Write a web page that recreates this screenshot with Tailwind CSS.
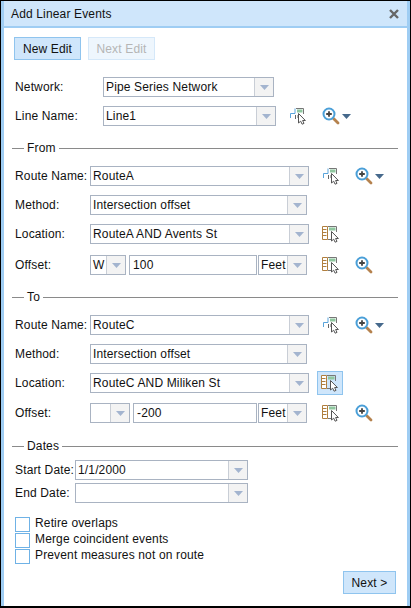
<!DOCTYPE html>
<html lang="en">
<head>
  <meta charset="UTF-8">
  <title>Add Linear Events</title>
  <script src="https://cdn.jsdelivr.net/npm/@tailwindcss/browser@4"></script>
</head>
<body class="bg-white font-['Liberation_Sans',Arial,sans-serif] text-[12px] tracking-[0.15px] text-[#111]">
  <svg class="hidden">
    <symbol id="arrow" viewBox="0 0 9 5"><path d="M0 0h9L4.500 5z" fill="#a3b4cf"/></symbol>
    <symbol id="pick" viewBox="0 0 18 18">
      <path d="M1.500 11V6.500h4.500V1.500" fill="none" stroke="#5aa5dc" stroke-width="1"/>
      <path d="M7 1.500h7.500V7" fill="none" stroke="#777" stroke-width="1"/>
      <path d="M8 2.500h5.500v3H8z" fill="#8fc79f"/>
      <path d="M6.500 8v4M9 8v3" stroke="#666" stroke-width="1"/>
      <path d="M9.500 6.500v9.500l2.200-1.800 1.400 3 1.900-.8-1.400-2.900h2.800z" fill="#fff" stroke="#555" stroke-width="1"/>
    </symbol>
    <symbol id="table" viewBox="0 0 18 18">
      <path d="M.5 1.500h5v13h-5z" fill="#fff" stroke="#b07f3e" stroke-width="1"/>
      <path d="M1 4.500h3.500M1 7.500h3.500M1 10.500h3.500" stroke="#b07f3e" stroke-width="1.200"/>
      <path d="M6 1.500h8.500V7M6 14.500h3" fill="none" stroke="#777" stroke-width="1"/>
      <path d="M7 2.500h6.500v3H7z" fill="#8fc79f"/>
      <path d="M9.500 6.500v9.500l2.200-1.800 1.400 3 1.900-.8-1.400-2.900h2.800z" fill="#fff" stroke="#555" stroke-width="1"/>
    </symbol>
    <symbol id="zoom" viewBox="0 0 18 18">
      <path d="M11.500 11.500l4.500 4.500" stroke="#b5824e" stroke-width="2.800" stroke-linecap="round"/>
      <circle cx="7" cy="7" r="5.500" fill="#fff" stroke="#4a9fd8" stroke-width="2"/>
      <path d="M4.200 7h5.600M7 4.200v5.600" stroke="#444" stroke-width="1.800"/>
    </symbol>
  </svg>

  <div class="h-[608px] border-x-[1px] border-t-[1px] border-b-[2px] border-black">
    <div class="flex h-full flex-col border-x-[3px] border-[#9fcdf3]">
      <!-- title bar -->
      <div class="flex h-[25px] shrink-0 items-center justify-between bg-[#cfe6fb] pl-[7px] pr-[8px] text-[12px]">
        <span>Add Linear Events</span>
        <svg class="h-[10px] w-[10px]" viewBox="0 0 10 10"><path d="M1 1l8 8M9 1l-8 8" stroke="#666" stroke-width="2.400"/></svg>
      </div>

      <div class="relative grow border-t-[2px] border-[#9fcdf3] pl-[10px] pt-[9px]">
        <div class="flex gap-[7px]">
          <div class="flex h-[23px] w-[67px] items-center justify-center border border-[#8fc4ee] bg-[#cfe6fb]">New Edit</div>
          <div class="flex h-[23px] w-[67px] items-center justify-center border border-[#d5e8f9] bg-[#eef6fd] text-[#b5b5b5]">Next Edit</div>
        </div>

        <!-- network -->
        <div class="mt-[17px] flex h-[20px] items-center">
          <span class="ml-[1px] w-[88px] shrink-0">Network:</span>
          <div class="flex h-[20px] w-[171px] border border-[#a9b3c2]"><span class="grow pl-[2px] leading-[18px]">Pipe Series Network</span><span class="flex w-[19px] items-center justify-center border-l border-[#c9ced6] bg-[#f3f3f3]"><svg class="h-[5px] w-[9px]"><use href="#arrow"/></svg></span></div>
        </div>
        <div class="mt-[9px] flex h-[20px] items-center">
          <span class="ml-[1px] w-[88px] shrink-0">Line Name:</span>
          <div class="flex h-[20px] w-[173px] border border-[#a9b3c2]"><span class="grow pl-[2px] leading-[18px]">Line1</span><span class="flex w-[19px] items-center justify-center border-l border-[#c9ced6] bg-[#f3f3f3]"><svg class="h-[5px] w-[9px]"><use href="#arrow"/></svg></span></div>
          <svg class="ml-[13px] h-[18px] w-[18px]"><use href="#pick"/></svg>
          <svg class="ml-[15px] h-[18px] w-[18px]"><use href="#zoom"/></svg>
          <svg class="ml-[2px] h-[5px] w-[9px]" viewBox="0 0 9 5"><path d="M0 0h9L4.500 5z" fill="#46698c"/></svg>
        </div>

        <!-- from -->
        <div class="mt-[14px] mr-[9px] ml-[-2px] flex h-[16px] items-center gap-[3px]">
          <span class="h-[1px] w-[12px] bg-[#8a8a8a]"></span><span>From</span><span class="h-[1px] grow bg-[#8a8a8a]"></span>
        </div>
        <div class="mt-[10px] flex h-[20px] items-center">
          <span class="ml-[1px] w-[75px] shrink-0">Route Name:</span>
          <div class="flex h-[20px] w-[219px] border border-[#a9b3c2]"><span class="grow pl-[2px] leading-[18px]">RouteA</span><span class="flex w-[19px] items-center justify-center border-l border-[#c9ced6] bg-[#f3f3f3]"><svg class="h-[5px] w-[9px]"><use href="#arrow"/></svg></span></div>
          <svg class="ml-[13px] h-[18px] w-[18px]"><use href="#pick"/></svg>
          <svg class="ml-[15px] h-[18px] w-[18px]"><use href="#zoom"/></svg>
          <svg class="ml-[2px] h-[5px] w-[9px]" viewBox="0 0 9 5"><path d="M0 0h9L4.500 5z" fill="#46698c"/></svg>
        </div>
        <div class="mt-[9px] flex h-[20px] items-center">
          <span class="ml-[1px] w-[75px] shrink-0">Method:</span>
          <div class="flex h-[20px] w-[217px] border border-[#a9b3c2]"><span class="grow pl-[2px] leading-[18px]">Intersection offset</span><span class="flex w-[19px] items-center justify-center border-l border-[#c9ced6] bg-[#f3f3f3]"><svg class="h-[5px] w-[9px]"><use href="#arrow"/></svg></span></div>
        </div>
        <div class="mt-[9px] flex h-[20px] items-center">
          <span class="ml-[1px] w-[75px] shrink-0">Location:</span>
          <div class="flex h-[20px] w-[219px] border border-[#a9b3c2]"><span class="grow pl-[2px] leading-[18px]">RouteA AND Avents St</span><span class="flex w-[19px] items-center justify-center border-l border-[#c9ced6] bg-[#f3f3f3]"><svg class="h-[5px] w-[9px]"><use href="#arrow"/></svg></span></div>
          <svg class="ml-[13px] h-[18px] w-[18px]"><use href="#table"/></svg>
        </div>
        <div class="mt-[11px] flex h-[20px] items-center">
          <span class="ml-[1px] w-[75px] shrink-0">Offset:</span>
          <div class="flex h-[20px] w-[36px] border border-[#a9b3c2]"><span class="grow pl-[2px] leading-[18px]">W</span><span class="flex w-[19px] shrink-0 items-center justify-center border-l border-[#c9ced6] bg-[#f3f3f3]"><svg class="h-[5px] w-[9px]"><use href="#arrow"/></svg></span></div>
          <div class="ml-[3px] h-[20px] w-[128px] border border-[#a9b3c2] pl-[3px] leading-[18px]">100</div>
          <div class="ml-[1px] flex h-[20px] w-[49px] border border-[#a9b3c2]"><span class="grow pl-[2px] leading-[18px]">Feet</span><span class="flex w-[19px] shrink-0 items-center justify-center border-l border-[#c9ced6] bg-[#f3f3f3]"><svg class="h-[5px] w-[9px]"><use href="#arrow"/></svg></span></div>
          <svg class="ml-[15px] h-[18px] w-[18px]"><use href="#table"/></svg>
          <svg class="ml-[15px] h-[18px] w-[18px]"><use href="#zoom"/></svg>
        </div>

        <!-- to -->
        <div class="mt-[14px] mr-[9px] ml-[-2px] flex h-[16px] items-center gap-[3px]">
          <span class="h-[1px] w-[12px] bg-[#8a8a8a]"></span><span>To</span><span class="h-[1px] grow bg-[#8a8a8a]"></span>
        </div>
        <div class="mt-[10px] flex h-[20px] items-center">
          <span class="ml-[1px] w-[75px] shrink-0">Route Name:</span>
          <div class="flex h-[20px] w-[219px] border border-[#a9b3c2]"><span class="grow pl-[2px] leading-[18px]">RouteC</span><span class="flex w-[19px] items-center justify-center border-l border-[#c9ced6] bg-[#f3f3f3]"><svg class="h-[5px] w-[9px]"><use href="#arrow"/></svg></span></div>
          <svg class="ml-[13px] h-[18px] w-[18px]"><use href="#pick"/></svg>
          <svg class="ml-[15px] h-[18px] w-[18px]"><use href="#zoom"/></svg>
          <svg class="ml-[2px] h-[5px] w-[9px]" viewBox="0 0 9 5"><path d="M0 0h9L4.500 5z" fill="#46698c"/></svg>
        </div>
        <div class="mt-[9px] flex h-[20px] items-center">
          <span class="ml-[1px] w-[75px] shrink-0">Method:</span>
          <div class="flex h-[20px] w-[217px] border border-[#a9b3c2]"><span class="grow pl-[2px] leading-[18px]">Intersection offset</span><span class="flex w-[19px] items-center justify-center border-l border-[#c9ced6] bg-[#f3f3f3]"><svg class="h-[5px] w-[9px]"><use href="#arrow"/></svg></span></div>
        </div>
        <div class="mt-[9px] flex h-[20px] items-center">
          <span class="ml-[1px] w-[75px] shrink-0">Location:</span>
          <div class="flex h-[20px] w-[219px] border border-[#a9b3c2]"><span class="grow pl-[2px] leading-[18px]">RouteC AND Miliken St</span><span class="flex w-[19px] items-center justify-center border-l border-[#c9ced6] bg-[#f3f3f3]"><svg class="h-[5px] w-[9px]"><use href="#arrow"/></svg></span></div>
          <div class="ml-[8px] flex h-[24px] w-[26px] items-center justify-center border border-[#8fc4ee] bg-[#cfe6fb]"><svg class="h-[18px] w-[18px]"><use href="#table"/></svg></div>
        </div>
        <div class="mt-[10px] flex h-[20px] items-center">
          <span class="ml-[1px] w-[75px] shrink-0">Offset:</span>
          <div class="flex h-[20px] w-[40px] border border-[#a9b3c2]"><span class="grow"></span><span class="flex w-[19px] shrink-0 items-center justify-center border-l border-[#c9ced6] bg-[#f3f3f3]"><svg class="h-[5px] w-[9px]"><use href="#arrow"/></svg></span></div>
          <div class="ml-[3px] h-[20px] w-[124px] border border-[#a9b3c2] pl-[3px] leading-[18px]">-200</div>
          <div class="ml-[1px] flex h-[20px] w-[49px] border border-[#a9b3c2]"><span class="grow pl-[2px] leading-[18px]">Feet</span><span class="flex w-[19px] shrink-0 items-center justify-center border-l border-[#c9ced6] bg-[#f3f3f3]"><svg class="h-[5px] w-[9px]"><use href="#arrow"/></svg></span></div>
          <svg class="ml-[15px] h-[18px] w-[18px]"><use href="#table"/></svg>
          <svg class="ml-[15px] h-[18px] w-[18px]"><use href="#zoom"/></svg>
        </div>

        <!-- dates -->
        <div class="mt-[15px] mr-[9px] ml-[-2px] flex h-[16px] items-center gap-[3px]">
          <span class="h-[1px] w-[12px] bg-[#8a8a8a]"></span><span>Dates</span><span class="h-[1px] grow bg-[#8a8a8a]"></span>
        </div>
        <div class="mt-[6px] flex h-[20px] items-center">
          <span class="ml-[1px] w-[60px] shrink-0">Start Date:</span>
          <div class="flex h-[20px] w-[173px] border border-[#a9b3c2]"><span class="grow pl-[2px] leading-[18px]">1/1/2000</span><span class="flex w-[19px] items-center justify-center border-l border-[#c9ced6] bg-[#f3f3f3]"><svg class="h-[5px] w-[9px]"><use href="#arrow"/></svg></span></div>
        </div>
        <div class="mt-[3px] flex h-[20px] items-center">
          <span class="ml-[1px] w-[60px] shrink-0">End Date:</span>
          <div class="flex h-[20px] w-[173px] border border-[#a9b3c2]"><span class="grow"></span><span class="flex w-[19px] items-center justify-center border-l border-[#c9ced6] bg-[#f3f3f3]"><svg class="h-[5px] w-[9px]"><use href="#arrow"/></svg></span></div>
        </div>

        <div class="mt-[14px] ml-[1px] flex flex-col gap-[1px]">
          <div class="flex h-[15px] items-start"><span class="h-[15px] w-[15px] border border-[#6fb2e6]"></span><span class="ml-[5px] leading-[13px]">Retire overlaps</span></div>
          <div class="flex h-[15px] items-start"><span class="h-[15px] w-[15px] border border-[#6fb2e6]"></span><span class="ml-[5px] leading-[13px]">Merge coincident events</span></div>
          <div class="flex h-[15px] items-start"><span class="h-[15px] w-[15px] border border-[#6fb2e6]"></span><span class="ml-[5px] leading-[13px]">Prevent measures not on route</span></div>
        </div>

        <div class="mt-[7px] mr-[11px] flex justify-end">
          <div class="flex h-[23px] w-[53px] items-center justify-center border border-[#8fc4ee] bg-[#cfe6fb]">Next &gt;</div>
        </div>
      </div>
    </div>
  </div>
</body>
</html>
